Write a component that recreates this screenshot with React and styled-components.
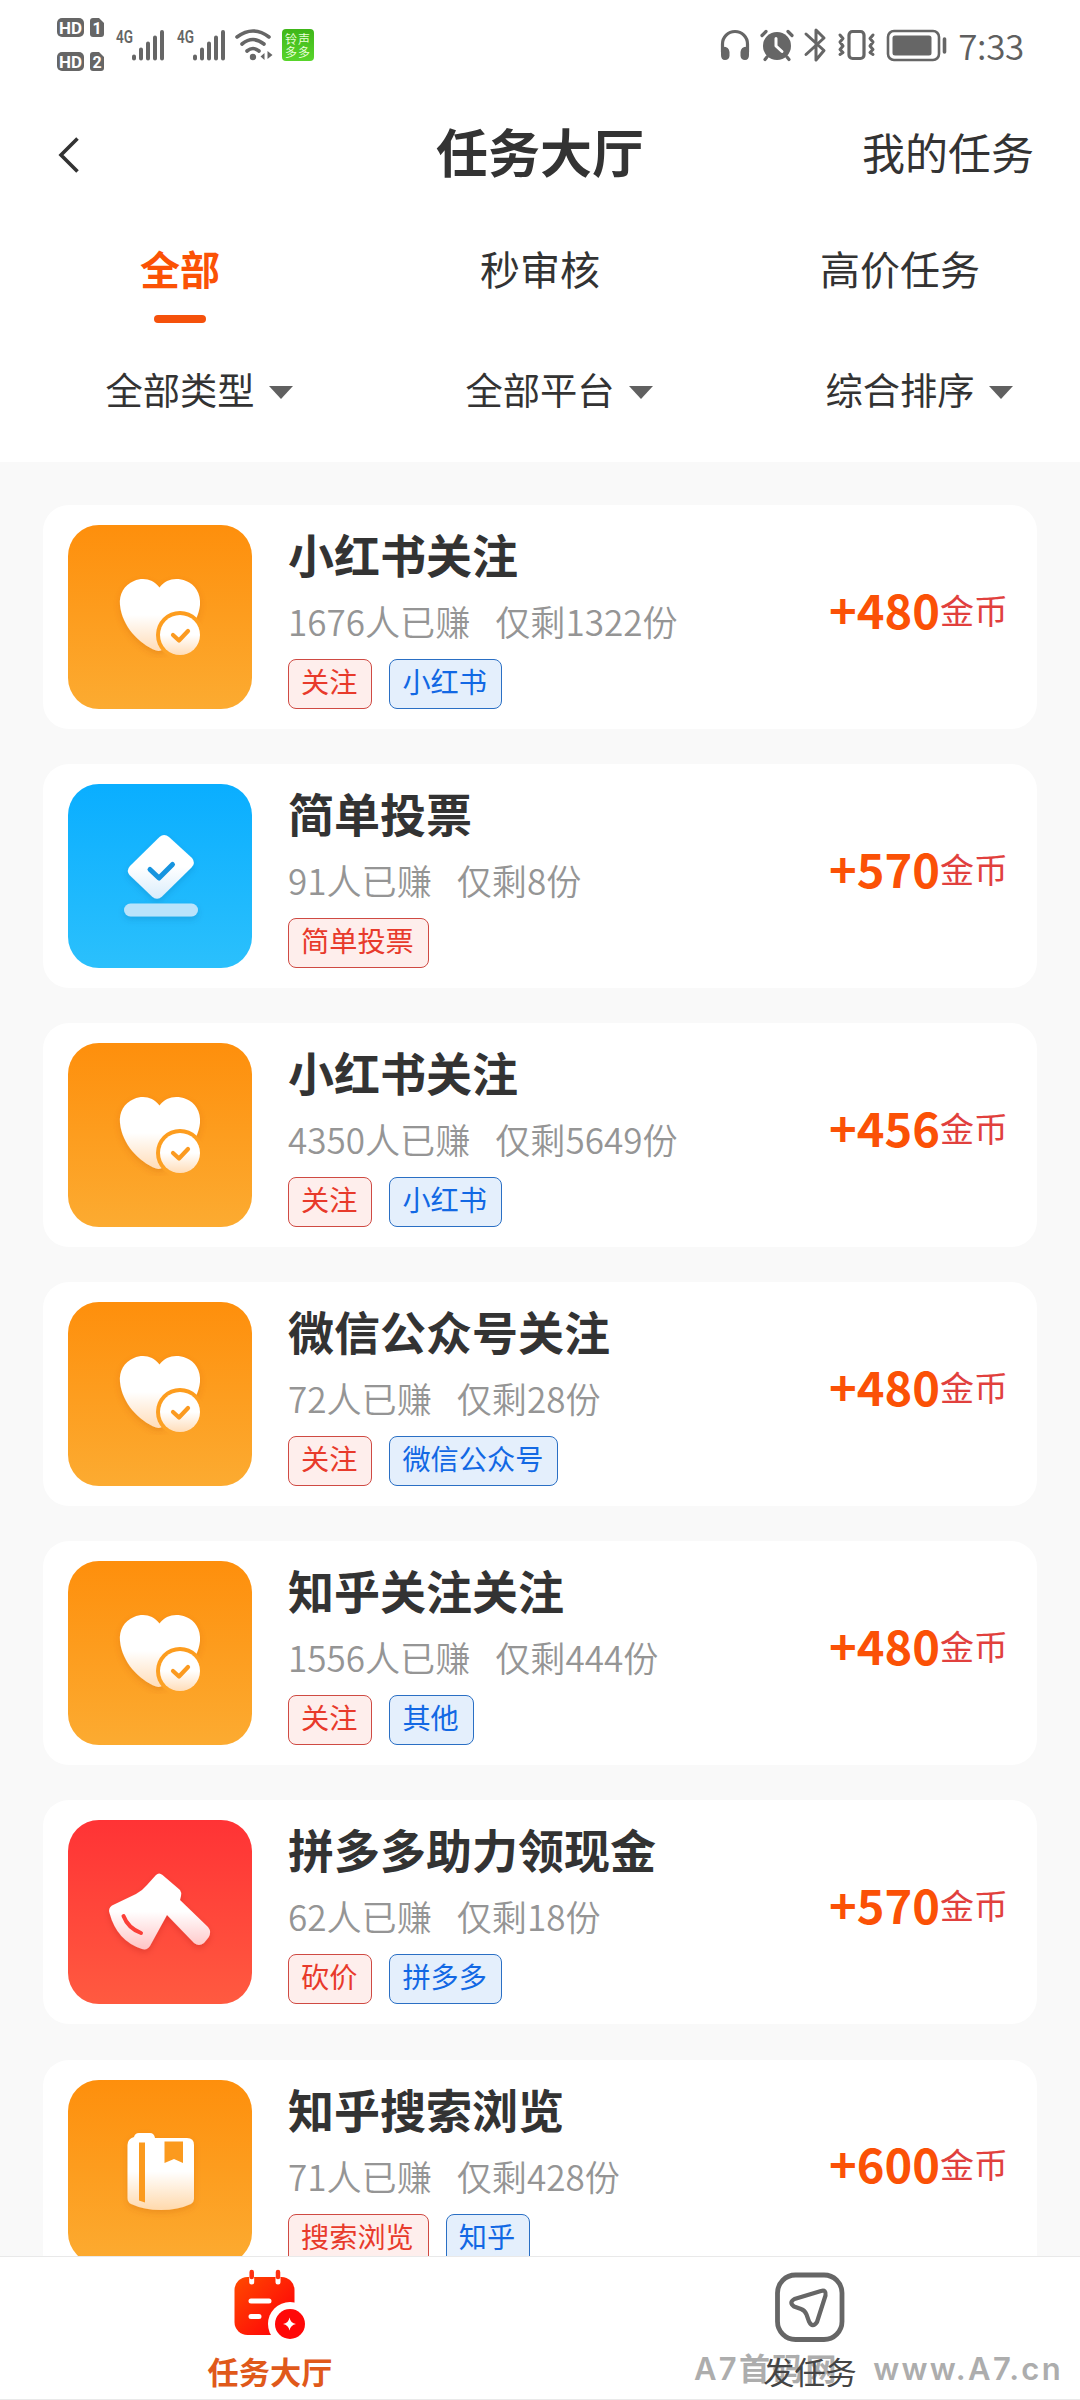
import React, { useState } from 'react';
import styled, { createGlobalStyle } from 'styled-components';

const GlobalStyle = createGlobalStyle`
  * {
    box-sizing: border-box;
  }
  body {
    margin: 0;
    background: #f9f9f9;
    font-family: "Noto Sans CJK SC", "Noto Sans", sans-serif;
    color: #333;
  }
`;

const Page = styled.div`
  display: flex;
  flex-direction: column;
  width: 1080px;
  height: 2400px;
  overflow: hidden;
  background: #f9f9f9;
`;

const Header = styled.header`
  flex: none;
  height: 462px;
  background: #fff;
`;

/* status bar */
const StatusBar = styled.div`
  display: flex;
  justify-content: space-between;
  height: 90px;
  padding: 0 56px;
`;
const StatusGroup = styled.div`
  display: flex;
  align-items: center;
  height: 90px;
`;
const WifiSvg = styled.svg`
  margin-left: 9px;
`;
const RingBadge = styled.div`
  display: grid;
  grid-template-columns: 13px 13px;
  justify-content: center;
  align-content: center;
  width: 32px;
  height: 32px;
  margin-left: 9px;
  border-radius: 4px;
  background: linear-gradient(#3fb619, #58d52b);
  color: #e9ffd9;
  font-size: 12px;
  line-height: 13px;
`;
const Clock = styled.span`
  margin-left: 10px;
  font-size: 35px;
  font-weight: 350;
  letter-spacing: -0.3px;
  line-height: 90px;
  color: #5f5f5f;
`;

/* title bar */
const TitleBar = styled.div`
  display: grid;
  grid-template-columns: 1fr auto 1fr;
  align-items: center;
  height: 120px;
  padding: 2px 46px 0 56px;
`;
const BackButton = styled.button`
  display: flex;
  padding: 8px 0 0;
  border: none;
  background: none;
`;
const Title = styled.h1`
  margin: 0 0 0 -10px;
  font-size: 52px;
  font-weight: 700;
  line-height: 118px;
`;
const MyTasks = styled.a`
  justify-self: end;
  font-size: 43px;
  line-height: 118px;
`;

/* tabs and filters */
const Tabs = styled.nav`
  display: grid;
  grid-template-columns: repeat(3, 1fr);
  height: 113px;
  padding-top: 28px;
`;
const Tab = styled.div`
  display: flex;
  flex-direction: column;
  align-items: center;
  font-size: 40px;
  line-height: 60px;
  font-weight: ${({ $active }) => ($active ? 700 : 400)};
  color: ${({ $active }) => ($active ? '#fb5205' : '#333')};

  &::after {
    content: '';
    width: 52px;
    height: 8px;
    margin-top: 17px;
    border-radius: 4px;
    background: ${({ $active }) => ($active ? '#f5510b' : 'transparent')};
  }
`;
const Filters = styled.div`
  display: grid;
  grid-template-columns: repeat(3, 1fr);
`;
const Filter = styled.div`
  display: flex;
  justify-content: center;
  align-items: center;
  gap: 14px;
  padding-left: 38px;
  font-size: 37.3px;
  line-height: 133px;
`;
const Arrow = styled.i`
  border: 12px solid transparent;
  border-top: 13px solid #606060;
  border-bottom: 0;
  margin-top: 6px;
`;

/* task list */
const List = styled.main`
  flex: 1;
  display: flex;
  flex-direction: column;
  gap: 35.1px;
  min-height: 0;
  padding: 43px 43px 0;
  overflow: hidden;
`;
const Card = styled.article`
  flex: none;
  display: flex;
  height: 224px;
  padding: 20px 29px 20px 25px;
  border-radius: 26px;
  background: #fff;
`;
const IconBox = styled.div`
  flex: none;
  width: 184px;
  height: 184px;
  border-radius: 31px;
  background: linear-gradient(${({ $from, $to }) => `${$from}, ${$to}`});

  svg {
    display: block;
  }
`;
const Info = styled.div`
  flex: 1;
  margin-left: 36px;
`;
const TaskName = styled.h2`
  margin: 0 0 15px;
  font-size: 46px;
  font-weight: 700;
  line-height: 56px;
  white-space: nowrap;
`;
const Meta = styled.p`
  display: flex;
  gap: 25px;
  margin: 0 0 13px;
  font-size: 35.1px;
  line-height: 50px;
  font-weight: 350;
  color: #959595;
`;
const Tags = styled.div`
  display: flex;
  gap: 17px;
`;
const Tag = styled.span`
  height: 50px;
  padding: 0 14px 0 12px;
  border: 1px solid ${({ $blue }) => ($blue ? '#2a6fc4' : '#cf4a43')};
  border-radius: 8px;
  background: ${({ $blue }) => ($blue ? '#e4effc' : '#feeeec')};
  color: ${({ $blue }) => ($blue ? '#1268e4' : '#e83a2b')};
  font-size: 28.2px;
  line-height: 42px;
`;
const Reward = styled.div`
  display: flex;
  align-items: center;
  align-self: center;
  margin-top: -17px;
  font-size: 34px;
  line-height: 60px;
  color: #e1403d;

  b {
    font-size: 47px;
    color: #fb5106;
  }
  span {
    margin-top: 2px;
  }
`;

/* bottom bar */
const BottomBar = styled.footer`
  position: relative;
  flex: none;
  display: grid;
  grid-template-columns: 1fr 1fr;
  height: 144px;
  border-top: 1px solid #e9e9e9;
  border-bottom: 1px solid #e9e9e9;
  background: #fff;
`;
const BottomItem = styled.div`
  position: relative;
  z-index: 1;
  display: flex;
  flex-direction: column;
  align-items: center;
  padding-top: 11px;
  font-size: 31.2px;
  line-height: 40px;
  font-weight: ${({ $active }) => ($active ? 700 : 400)};
  color: ${({ $active }) => ($active ? '#e0591a' : '#444')};

  svg {
    margin-bottom: 11px;
  }
`;
const Watermark = styled.div`
  position: absolute;
  right: 17px;
  bottom: 10px;
  display: flex;
  justify-content: space-between;
  width: 369px;
  font-family: Inter, "Noto Sans CJK SC", sans-serif;
  font-size: 31px;
  font-weight: 600;
  line-height: 40px;
  letter-spacing: 2.3px;
  color: #adadad;
  white-space: nowrap;
`;

const GREY = '#666';

const HdSims = () => (
  <svg width="48" height="56" viewBox="0 0 48 56">
    {[1, 2].map((n, i) => (
      <g key={n} transform={`translate(0 ${i * 34})`} fontFamily="Roboto" fontWeight="700" fill="#fff">
        <rect x="1" y="1" width="27" height="19" rx="5" fill={GREY} />
        <text x="14.5" y="16.5" fontSize="17" textAnchor="middle">HD</text>
        <path d="M37 1h6l5 5v11q0 3-3 3h-8q-3 0-3-3V4q0-3 3-3z" fill={GREY} />
        <text x="41" y="16.5" fontSize="16" textAnchor="middle">{n}</text>
      </g>
    ))}
  </svg>
);

const Signal = () => (
  <svg width="61" height="42" viewBox="0 -4 61 42">
    <text x="12" y="15" fontFamily="Roboto" fontSize="18" fontWeight="600" fill={GREY} textLength="17" lengthAdjust="spacingAndGlyphs">4G</text>
    <path d="M30 30.5v-2M37 30.5v-9M44 30.5v-15M51 30.5v-21M58 30.5V4" stroke={GREY} strokeWidth="4" strokeLinecap="round" />
  </svg>
);

const Wifi = () => (
  <WifiSvg width="38" height="34" viewBox="0 0 38 34" fill="none" stroke={GREY} strokeWidth="3.6" strokeLinecap="round">
    <path d="M2 9q16-12 32 0M7 16q11-9 22 0M12 23q6-5 12 0" />
    <circle cx="18" cy="29" r="3.2" fill={GREY} stroke="none" />
    <path d="M29.500 25v7l-4-3.500zM32.500 23v8l5-4z" fill={GREY} stroke="none" />
  </WifiSvg>
);

const StatusIcons = () => (
  <svg width="228" height="36" viewBox="720 27 228 36" fill="none" stroke={GREY} strokeWidth="3.200" strokeLinecap="round" strokeLinejoin="round">
    <path d="M722.500 52V44a12.500 12.500 0 0 1 25 0v8" />
    <path d="M721 47q8-1 8.500 5v4q-.5 4-4.500 4-4 0-4-5zM749 47q-8-1-8.500 5v4q.5 4 4.500 4 4 0 4-5z" fill={GREY} stroke="none" />
    <circle cx="777" cy="46" r="14" fill={GREY} stroke="none" />
    <path d="M762 35.500l4-4M792 35.500l-4-4M767 57l-2 2.500M787 57l2 2.500" />
    <path d="M776 38.500V46l6 5.500" stroke="#fff" strokeWidth="3" />
    <path d="M806 34l18 16.500-8 9.500V30l8 8-18 16.500" strokeWidth="3" />
    <rect x="849" y="31.500" width="15" height="27" rx="3.500" />
    <path d="M840 35l3 3.500-3 3.500 3 4-3 3.500 3 3-3 2M873 35l-3 3.500 3 3.500-3 4 3 3.500-3 3 3 2" strokeWidth="3" />
    <rect x="888" y="31" width="51" height="29" rx="6" strokeWidth="2.600" />
    <rect x="892.500" y="35.500" width="39" height="20" rx="2.500" fill={GREY} stroke="none" />
    <path d="M944.500 39v13" strokeWidth="3.600" />
  </svg>
);

const Shade = ({ id, color, shadow = '#b04a00' }) => (
  <defs>
    <linearGradient id={id} x1="0" y1="0" x2="0" y2="1">
      <stop offset="0.5" stopColor="#fff" />
      <stop offset="1" stopColor={color} />
    </linearGradient>
    <filter id={`${id}-shadow`} x="-20%" y="-20%" width="140%" height="150%">
      <feDropShadow dx="0" dy="3" stdDeviation="3" floodColor={shadow} floodOpacity="0.2" />
    </filter>
  </defs>
);

const HeartIcon = () => (
  <svg width="184" height="184" viewBox="0 0 184 184">
    <Shade id="heart" color="#ffddb9" />
    <mask id="heart-cut">
      <rect width="184" height="184" fill="#fff" />
      <circle cx="112" cy="110" r="24" fill="#000" />
    </mask>
    <path filter="url(#heart-shadow)" mask="url(#heart-cut)" fill="url(#heart)" d="M91.500 62.500C85 54 75 52 66 56C56 60 51 69 52 80C54 101 71 119 88 125.500Q91 126.500 94 125C116 116 130 98 132 80C133 69 127 59 118 56C108 52 98 54 91.500 62.500z" />
    <circle cx="112" cy="110" r="20" fill="url(#heart)" />
    <path d="M105 110l6 5.500 9-9.500" fill="none" stroke="#fb9a20" strokeWidth="4.200" strokeLinecap="round" strokeLinejoin="round" />
  </svg>
);

const VoteIcon = () => (
  <svg width="184" height="184" viewBox="0 0 184 184">
    <Shade id="vote" color="#d9ecfb" shadow="#00508a" />
    <g filter="url(#vote-shadow)">
      <path fill="url(#vote)" d="M91.500 53Q96 49 101 53L124 74Q128 79 123.500 83.500L94 112.500Q89 117 84 112.500L61.500 91Q58 86.500 62 82z" />
      <rect x="56" y="119.500" width="74" height="13" rx="6.500" fill="#b9e3fb" />
    </g>
    <path d="M82 85.500l9 8.500 13.500-13.500" fill="none" stroke="#1694df" strokeWidth="5" strokeLinecap="round" strokeLinejoin="round" />
  </svg>
);

const AxeIcon = () => (
  <svg width="184" height="184" viewBox="0 0 184 184">
    <Shade id="axe" color="#ffc3c4" shadow="#8a0000" />
    <path
      filter="url(#axe-shadow)"
      fill="url(#axe)"
      d="M88 55Q91 52 94.500 55L112 70Q114 73 113 76L112 80L140 107Q144 112 140.500 117.500L136 123Q131 127 126 123L99 95L82 126Q79 130.500 74 129Q49 121 41.500 93Q40 88 44 85.500L68 74Q75 70 79 65z"
    />
    <path d="M55.500 96Q60 108 73 113" fill="none" stroke="#fb3f38" strokeWidth="4" strokeLinecap="round" />
  </svg>
);

const BookIcon = () => (
  <svg width="184" height="184" viewBox="0 0 184 184">
    <Shade id="book" color="#ffd9ac" />
    <path
      filter="url(#book-shadow)"
      fill="url(#book)"
      d="M66 57Q67 53 71 53H82Q86 53 87 58H119Q126 58 126 65V119Q126 122 123 124Q110 130 93 130Q76 130 63 124Q59.500 122 59.500 118V65Q59.500 59 66 57z"
    />
    <path d="M71 62.500h6v60l-6-2zM96.500 61.500h18.500v21.500l-9-4-9.500 4z" fill="#fb9a1e" />
  </svg>
);

const TaskHallIcon = () => (
  <svg width="76" height="72" viewBox="0 0 76 72">
    <defs>
      <linearGradient id="hall" gradientUnits="userSpaceOnUse" x1="6" y1="8" x2="66" y2="66">
        <stop offset="0" stopColor="#ff4800" />
        <stop offset="0.8" stopColor="#ff0808" />
      </linearGradient>
      <mask id="hall-cut">
        <rect width="76" height="72" fill="#fff" />
        <circle cx="58" cy="56" r="22" fill="#000" />
      </mask>
    </defs>
    <rect mask="url(#hall-cut)" x="2.500" y="9" width="60" height="58" rx="13" fill="url(#hall)" />
    <path d="M19.700 10v4M46 10v4" stroke="#fff" strokeWidth="5" strokeLinecap="round" />
    <path d="M19.700 4v5M46 4v5" stroke="#ff3010" strokeWidth="4.500" strokeLinecap="round" />
    <path d="M19 33h18M19 48.500h8" stroke="#fff" strokeWidth="5" strokeLinecap="round" />
    <circle cx="58" cy="56" r="15" fill="#ff0808" />
    <path d="M57.500 49.500Q58.500 55 64 56Q58.500 57 57.500 62.500Q56.500 57 51 56Q56.500 55 57.500 49.500z" fill="#fff" />
  </svg>
);

const SendIcon = () => (
  <svg width="72" height="72" viewBox="0 -3.500 72 72" overflow="visible" fill="none" stroke="#666" strokeWidth="4.800" strokeLinejoin="round">
    <rect x="3.500" y="3.500" width="64.500" height="64.500" rx="18" />
    <path d="M47 19.500L20.500 27.500Q14.500 31 20 35L27 37.500Q31 39 32.500 43L35 50Q38.500 57 43 50.500L51.500 24Q52.500 18 47 19.500z" strokeWidth="4.200" />
  </svg>
);

const KINDS = {
  follow: { icon: HeartIcon, from: '#fe8f0c', to: '#fcab31' },
  vote: { icon: VoteIcon, from: '#0aaeff', to: '#2bc0fc' },
  bargain: { icon: AxeIcon, from: '#ff3335', to: '#ff5a40' },
  browse: { icon: BookIcon, from: '#fe8f0c', to: '#fcab31' }
};

const TASKS = [
  { kind: 'follow', name: '小红书关注', earned: 1676, left: 1322, tags: ['关注', '小红书'], coins: 480 },
  { kind: 'vote', name: '简单投票', earned: 91, left: 8, tags: ['简单投票'], coins: 570 },
  { kind: 'follow', name: '小红书关注', earned: 4350, left: 5649, tags: ['关注', '小红书'], coins: 456 },
  { kind: 'follow', name: '微信公众号关注', earned: 72, left: 28, tags: ['关注', '微信公众号'], coins: 480 },
  { kind: 'follow', name: '知乎关注关注', earned: 1556, left: 444, tags: ['关注', '其他'], coins: 480 },
  { kind: 'bargain', name: '拼多多助力领现金', earned: 62, left: 18, tags: ['砍价', '拼多多'], coins: 570 },
  { kind: 'browse', name: '知乎搜索浏览', earned: 71, left: 428, tags: ['搜索浏览', '知乎'], coins: 600 }
];

const TABS = ['全部', '秒审核', '高价任务'];
const FILTERS = ['全部类型', '全部平台', '综合排序'];

function TaskCard({ task }) {
  const { icon: Icon, from, to } = KINDS[task.kind];

  return (
    <Card>
      <IconBox $from={from} $to={to}><Icon /></IconBox>
      <Info>
        <TaskName>{task.name}</TaskName>
        <Meta>
          <span>{task.earned}人已赚</span>
          <span>仅剩{task.left}份</span>
        </Meta>
        <Tags>
          {task.tags.map((tag, i) => <Tag key={tag} $blue={i > 0}>{tag}</Tag>)}
        </Tags>
      </Info>
      <Reward><b>+{task.coins}</b><span>金币</span></Reward>
    </Card>
  );
}

export default function App() {
  const [tab, setTab] = useState(0);

  return (
    <Page>
      <GlobalStyle />
      <Header>
        <StatusBar>
          <StatusGroup>
            <HdSims />
            <Signal />
            <Signal />
            <Wifi />
            <RingBadge>
              <span>铃</span><span>声</span><span>多</span><span>多</span>
            </RingBadge>
          </StatusGroup>
          <StatusGroup>
            <StatusIcons />
            <Clock>7:33</Clock>
          </StatusGroup>
        </StatusBar>
        <TitleBar>
          <BackButton>
            <svg width="26" height="36" viewBox="0 0 26 36" fill="none" stroke="#333" strokeWidth="3.600">
              <path d="M21.500 1.500L5 18l16.500 16.500" />
            </svg>
          </BackButton>
          <Title>任务大厅</Title>
          <MyTasks>我的任务</MyTasks>
        </TitleBar>
        <Tabs>
          {TABS.map((name, i) => (
            <Tab key={name} $active={tab === i} onClick={() => setTab(i)}>{name}</Tab>
          ))}
        </Tabs>
        <Filters>
          {FILTERS.map(name => <Filter key={name}>{name}<Arrow /></Filter>)}
        </Filters>
      </Header>
      <List>
        {TASKS.map((task, i) => <TaskCard key={i} task={task} />)}
      </List>
      <BottomBar>
        <Watermark><span>A7首码网</span><span>www.A7.cn</span></Watermark>
        <BottomItem $active><TaskHallIcon />任务大厅</BottomItem>
        <BottomItem><SendIcon />发任务</BottomItem>
      </BottomBar>
    </Page>
  );
}
